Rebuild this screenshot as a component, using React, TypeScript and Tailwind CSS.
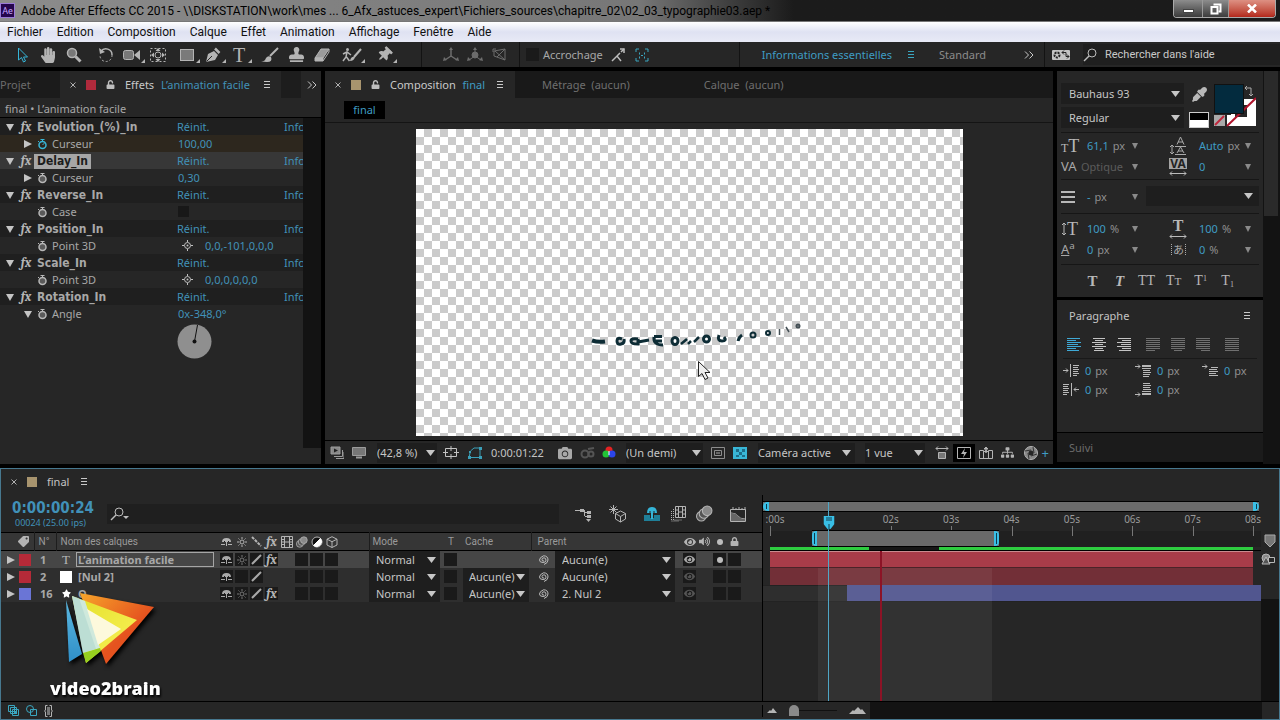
import { useState } from 'react';
import type { CSSProperties, ReactNode } from 'react';
import {
  FaCamera, FaEye, FaEyeDropper, FaHandPaper, FaLock, FaSitemap,
  FaStamp, FaStar, FaTag, FaThumbtack, FaUnlock, FaVolumeUp,
} from 'react-icons/fa';

interface IconProps {
  w?: number;
  h?: number;
  className?: string;
  children: ReactNode;
}

const Icon = ({ w = 16, h = 16, className = '', children }: IconProps) => (
  <svg
    width={w}
    height={h}
    viewBox={`0 0 ${w} ${h}`}
    fill="none"
    stroke="currentColor"
    className={`shrink-0 ${className}`}
    aria-hidden="true"
  >
    {children}
  </svg>
);

const Down = ({ className = '' }: { className?: string }) => (
  <Icon w={9} h={6} className={className}>
    <path d="M0 0h9L4.500 6z" fill="currentColor" stroke="none" />
  </Icon>
);

const SmallDown = () => (
  <Icon w={6} h={6} className="text-[#8a8a8a]">
    <path d="M0 0h6L3 6z" fill="currentColor" stroke="none" />
  </Icon>
);

const Twirl = ({ open = false }: { open?: boolean }) => (
  <Icon w={8} h={8} className="text-[#c4c4c4]">
    <path d={open ? 'M0 1h8L4 8z' : 'M0 0v8l8-4z'} fill="currentColor" stroke="none" />
  </Icon>
);

const MenuLines = ({ className = 'text-[#c8c8c8]' }: { className?: string }) => (
  <Icon w={7} h={8} className={className}>
    <path d="M0 .5h6M0 3.500h6M0 6.500h6" />
  </Icon>
);

const Close = () => (
  <Icon w={6} h={6} className="text-[#b0b0b0]">
    <path d="M.5 .5l5 5M5.500 .5l-5 5" />
  </Icon>
);

const Chevrons = () => (
  <Icon w={10} h={8} className="text-[#c8c8c8]">
    <path d="M1 .5L4.500 4 1 7.500M5.500 .5L9 4 5.500 7.500" />
  </Icon>
);

const Fx = () => <span className="font-serif text-[13px] leading-[13px] font-bold italic text-[#b5b5b5]">fx</span>;

const Loupe = ({ caret = false }: { caret?: boolean }) => (
  <Icon w={20} h={14} className="text-[#bdbdbd]">
    <circle cx="9" cy="5" r="4" />
    <path d="M6 8l-5 5" strokeWidth="1.500" />
    {caret && <path d="M13 9h6l-3 3z" fill="currentColor" stroke="none" />}
  </Icon>
);

const Stopwatch = ({ active = false }: { active?: boolean }) => (
  <Icon w={11} h={12} className={active ? 'text-[#39b6d6]' : 'text-[#b8b8b8]'}>
    <circle cx="5.500" cy="7" r="3.500" strokeWidth="1.500" fill={active ? 'none' : '#5a5a5a'} />
    <path d="M3.500 1.500h4M5.500 1.500v2M1 3l1 1" />
    {active && <path d="M5.500 7l2-2" />}
  </Icon>
);

const Shy = () => (
  <Icon w={11} h={9}>
    <path d="M1 5q0-4 4.500-4T10 5z" fill="currentColor" stroke="none" />
    <path d="M5.500 3v6M0 7.500h4M7 7.500h4" />
    <path d="M3.500 5V4M7.500 5V4" stroke="#222" />
  </Icon>
);

const Sun = () => (
  <Icon w={10} h={10}>
    <circle cx="5" cy="5" r="2" />
    <path d="M5 0v2M5 8v2M0 5h2M8 5h2M1.500 1.500l1 1M7.500 7.500l1 1M8.500 1.500l-1 1M2.500 7.500l-1 1" />
  </Icon>
);

const Slash = () => (
  <Icon w={11} h={11}>
    <path d="M1 10L10 1" strokeWidth="2" />
  </Icon>
);

const Balls = ({ size = 12 }: { size?: number }) => (
  <svg width={size} height={size} viewBox="0 0 16 16" fill="#555" stroke="currentColor" className="shrink-0" aria-hidden="true">
    <circle cx="5" cy="10.500" r="4.500" />
    <circle cx="7.500" cy="8" r="4.500" />
    <circle cx="10.500" cy="5.500" r="4.500" fill="#8a8a8a" />
  </svg>
);

const Cube = () => (
  <Icon w={12} h={12}>
    <path d="M6 .7l5 2.500v5.800L6 11.500 1 9V3.200zM1 3.200l5 2.500 5-2.500M6 5.700v5.800" />
  </Icon>
);

const Film = () => (
  <Icon w={12} h={12}>
    <path d="M.5 .5h11v11H.5zM3.500 .5v11M8.500 .5v11M.5 3.500h3M.5 6h3M.5 8.500h3M8.500 3.500h3M8.500 6h3M8.500 8.500h3M3.500 6h5" />
  </Icon>
);

const Whip = () => (
  <Icon w={11} h={10} className="text-[#bdbdbd]">
    <path d="M6 6q-2 .5-2-1.500Q4 2.800 6 2.800T8 5.200Q8 7.500 5 7.500 1.500 7.500 1.500 5T5.500 .8Q10 .8 10 5q0 3-4 4.500" />
  </Icon>
);

const ToolButton = ({ label, corner = false, children }: { label: string; corner?: boolean; children: ReactNode }) => (
  <button type="button" aria-label={label} className="relative flex h-6 w-[26px] shrink-0 items-center justify-center text-[#b4b4b4]">
    {children}
    {corner && <span className="absolute right-0 bottom-1 border-[2px] border-transparent border-r-[#b4b4b4] border-b-[#b4b4b4]" />}
  </button>
);

const Divider = ({ className = '' }: { className?: string }) => <span className={`w-px self-stretch bg-[#131313] ${className}`} />;

interface PickProps {
  label: string;
  options: string[];
  className?: string;
  arrow?: string;
}

const Pick = ({ label, options, className = '', arrow = 'right-1' }: PickProps) => (
  <span className={`relative flex items-center bg-[#1e1e1e] text-[#c6c6c6] ${className}`}>
    <select aria-label={label} className="h-full w-full appearance-none bg-transparent p-0 outline-none">
      {options.map((o) => <option key={o}>{o}</option>)}
    </select>
    <Down className={`pointer-events-none absolute ${arrow}`} />
  </span>
);

const TitleBar = () => (
  <header className="flex h-[21px] items-center bg-linear-to-r from-[#8c8c8c] via-[#777] via-50% to-[#1b1b1b] to-62% font-['Roboto','Noto_Sans',sans-serif] text-[12px] leading-[20px] text-black">
    <span className="flex h-[15px] w-[15px] items-center justify-center border border-[#9a7bd8] bg-[#25064d] text-[9px] text-[#c9a8ff]">Ae</span>
    <h1 className="ml-1.5 whitespace-nowrap">
      Adobe After Effects CC 2015 - \\DISKSTATION\work\mes ... 6_Afx_astuces_expert\Fichiers_sources\chapitre_02\02_03_typographie03.aep *
    </h1>
    <div className="mr-1 ml-auto flex h-[18px] self-start overflow-hidden rounded-b border border-t-0 border-[#aaa] text-white">
      <button type="button" aria-label="Réduire" className="flex w-[28px] items-center justify-center bg-linear-to-b from-[#8d8d8d] to-[#3d3d3d]">
        <span className="mt-1 h-[4px] w-[11px] border border-[#444] bg-white" />
      </button>
      <button type="button" aria-label="Restaurer" className="flex w-[27px] items-center justify-center border-x border-[#999] bg-linear-to-b from-[#8d8d8d] to-[#3d3d3d]">
        <Icon w={12} h={12}><path d="M3.500 1.500h7v7h-2" strokeWidth="2" /><path d="M1.500 4h6v6.500h-6z" strokeWidth="2" /></Icon>
      </button>
      <button type="button" aria-label="Fermer" className="flex w-[46px] items-center justify-center bg-linear-to-b from-[#dd9083] to-[#b3261a]">
        <Icon w={10} h={9}><path d="M1 .5l8 8M9 .5l-8 8" strokeWidth="2.500" /></Icon>
      </button>
    </div>
  </header>
);

const MENUS = ['Fichier', 'Edition', 'Composition', 'Calque', 'Effet', 'Animation', 'Affichage', 'Fenêtre', 'Aide'];

const MenuBar = () => (
  <nav className="flex h-[21px] items-center gap-[14px] border-t border-[#777] bg-linear-to-b from-white via-[#dfe2f2] via-50% to-[#e8eaf6] pl-[7px] font-['Roboto','Noto_Sans',sans-serif] text-[12px] text-[#111]">
    {MENUS.map((m) => <button key={m} type="button">{m}</button>)}
  </nav>
);

const Toolbar = () => (
  <div className="flex h-[25px] items-center bg-[#262626] pl-[9px] text-[#a8a8a8]">
    <ToolButton label="Sélection">
      <Icon className="text-[#35b5d8]"><path d="M4.500 1v12l3-2.500 2 4.500 2-1-2-4h4z" /></Icon>
    </ToolButton>
    <ToolButton label="Main"><FaHandPaper size={16} /></ToolButton>
    <ToolButton label="Zoom">
      <Icon><circle cx="6" cy="6" r="4.500" fill="#777" strokeWidth="1.500" /><path d="M9.500 9.500l5 5" strokeWidth="3" /></Icon>
    </ToolButton>
    <span className="w-1.5" />
    <ToolButton label="Rotation">
      <Icon>
        <path d="M3 4.500A6 6 0 0 1 14 8" strokeWidth="1.500" />
        <path d="M14 8A6 6 0 0 1 2 9" strokeDasharray="2 2" />
        <path d="M1 1l1 6 5-2z" fill="currentColor" stroke="none" />
      </Icon>
    </ToolButton>
    <ToolButton label="Caméra" corner>
      <Icon w={18}><rect x=".5" y="3.500" width="10" height="9" rx="2" fill="#777" /><path d="M11 8l6-5v10z" fill="currentColor" stroke="none" /></Icon>
    </ToolButton>
    <ToolButton label="Déplacement arrière">
      <Icon>
        <rect x=".5" y="1.500" width="15" height="13" strokeDasharray="2 2" />
        <circle cx="8" cy="8" r="3" />
        <path d="M8 1l2.500 3h-5zM8 15l2.500-3h-5zM1 8l3-2.500v5zM15 8l-3-2.500v5z" fill="currentColor" stroke="none" />
      </Icon>
    </ToolButton>
    <span className="w-[3px]" />
    <ToolButton label="Rectangle" corner>
      <Icon><rect x="1.500" y="2.500" width="13" height="11" fill="#7a7a7a" /></Icon>
    </ToolButton>
    <ToolButton label="Plume" corner>
      <Icon><path d="M1 15l2-8 6-3 4 4-3 5z" fill="currentColor" stroke="none" /><path d="M1.500 14.500L7 9" stroke="#262626" /><path d="M10 1.500l4.500 4.500" strokeWidth="2.500" /></Icon>
    </ToolButton>
    <ToolButton label="Texte" corner><span className="font-['Liberation_Serif'] text-[20px] leading-none">T</span></ToolButton>
    <span className="w-[5px]" />
    <ToolButton label="Pinceau">
      <Icon w={18}><path d="M17 1l-8 8" strokeWidth="2" /><path d="M0 14.500q4 0 5-3.500 2-3 5-1 2 5-4 5z" fill="currentColor" stroke="none" /></Icon>
    </ToolButton>
    <ToolButton label="Tampon"><FaStamp size={15} /></ToolButton>
    <ToolButton label="Gomme">
      <Icon><path d="M1 11l6-9h8l-6 9z" fill="#9a9a9a" /><path d="M1 11h8v3H1z" fill="currentColor" /><path d="M9 14l6-9V2" /></Icon>
    </ToolButton>
    <span className="w-1" />
    <ToolButton label="Roto-pinceau" corner>
      <Icon w={20}>
        <circle cx="5.500" cy="2.500" r="1.500" fill="currentColor" stroke="none" />
        <path d="M5 5l-1 5-3 4M4.500 10l3 4M1 7l4-2 4 3" strokeWidth="1.500" />
        <path d="M19 2l-7 8" strokeWidth="2" /><path d="M8 14q1-5 5-4-1 4-5 4z" fill="currentColor" stroke="none" />
      </Icon>
    </ToolButton>
    <span className="w-1.5" />
    <ToolButton label="Marionnette" corner><FaThumbtack size={15} className="rotate-45" /></ToolButton>
    <Divider className="mr-[21px] ml-6" />
    <div className="flex gap-2 text-[#6d6d6d]">
      <Icon><path d="M8 9V2M8 9l-6 4M8 9l6 4" strokeWidth="1.500" /><path d="M8 0l2 3H6zM0 14l1-4 3 3zM16 14l-1-4-3 3z" fill="currentColor" stroke="none" /></Icon>
      <Icon><circle cx="8" cy="8" r="3" fill="currentColor" /><path d="M8 9V2M8 9l-6 4M8 9l6 4" /><path d="M8 0l2 3H6zM0 14l1-4 3 3zM16 14l-1-4-3 3z" fill="currentColor" stroke="none" /></Icon>
      <Icon><path d="M3 4l11-2v11L3 9zM4 4l10 9M2 2h3M2 2v3M6 10l8-8" /></Icon>
    </div>
    <Divider className="mr-1.5 ml-3" />
    <label className="flex items-center gap-1">
      <input type="checkbox" className="h-[13px] w-[13px] appearance-none bg-[#1a1a1a]" />
      Accrochage
    </label>
    <div className="ml-2 flex gap-2.5">
      <Icon w={14} className="text-[#bdbdbd]"><path d="M1 14l5-5 4 5M6 9l3-3M10 5l3-3" strokeWidth="1.500" /><path d="M9 2h4v4" strokeWidth="1.500" /></Icon>
      <Icon w={14} className="text-[#3aa6c0]">
        <path d="M1 5V2h3M10 2h3v3M13 11v3h-3M4 14H1v-3M4.500 5.500v2M9.500 5.500v2M4.500 9.500v2M9.500 9.500v2M6 8.500h2" />
      </Icon>
    </div>
    <Divider className="mr-[22px] ml-auto" />
    <button type="button" className="text-[#3f9cc4]">Informations essentielles</button>
    <MenuLines className="ml-4 text-[#3aa6c0]" />
    <button type="button" className="ml-6 text-[#8c8c8c]">Standard</button>
    <span className="ml-[38px]"><Chevrons /></span>
    <Divider className="mr-1.5 ml-2.5" />
    <Icon w={20} h={12} className="text-[#c4c4c4]">
      <rect x="1" y="1" width="18" height="10" fill="currentColor" stroke="none" rx="1" />
      <circle cx="6" cy="6" r="2.500" stroke="#222" strokeWidth="2" strokeDasharray="2 1" />
      <path d="M11 3.500h4v4h3M13 1.500l-2 2 2 2M16 5.500l2 2-2 2" stroke="#222" />
    </Icon>
    <label className="ml-3 flex h-[21px] w-[197px] items-center bg-[#1f1f1f]">
      <Loupe />
      <input aria-label="Rechercher dans l'aide" placeholder="Rechercher dans l'aide" className="ml-0.5 w-full bg-transparent font-['Roboto','Noto_Sans',sans-serif] text-[11px] outline-none placeholder:text-[#c9c9c9]" />
    </label>
  </div>
);

interface Effect {
  name: string;
  prop: string;
  value?: string;
  kind: 'slider' | 'check' | 'point' | 'angle';
}

const EFFECTS: Effect[] = [
  { name: 'Evolution_(%)_In', prop: 'Curseur', value: '100,00', kind: 'slider' },
  { name: 'Delay_In', prop: 'Curseur', value: '0,30', kind: 'slider' },
  { name: 'Reverse_In', prop: 'Case', kind: 'check' },
  { name: 'Position_In', prop: 'Point 3D', value: '0,0,-101,0,0,0', kind: 'point' },
  { name: 'Scale_In', prop: 'Point 3D', value: '0,0,0,0,0,0', kind: 'point' },
  { name: 'Rotation_In', prop: 'Angle', value: '0x-348,0°', kind: 'angle' },
];

const EffectRows = ({ effect, selected, keyed, onSelect }: { effect: Effect; selected: boolean; keyed: boolean; onSelect: () => void }) => (
  <li>
    <div className={`flex h-[17px] items-center overflow-hidden ${selected ? 'bg-[#373737]' : 'bg-[#1f1f1f]'}`}>
      <span className="flex w-[18px] shrink-0 justify-end pr-1"><Twirl open /></span>
      <span className="w-[16px] shrink-0 text-center"><Fx /></span>
      <span className="w-[143px] shrink-0">
        <button
          type="button"
          onClick={onSelect}
          className={`h-[15px] px-[3px] font-['DejaVu_Sans_Condensed','Noto_Sans',sans-serif] text-[12px] leading-[15px] font-bold ${selected ? 'bg-[#a6a6a6] text-[#1c1c1c]' : ''}`}
        >
          {effect.name}
        </button>
      </span>
      <button type="button" className="w-[107px] shrink-0 text-left text-[#4191b8]">Réinit.</button>
      <button type="button" className="shrink-0 text-[#4191b8]">Info</button>
    </div>
    <div className={`flex h-[17px] items-center ${keyed ? 'bg-[#2d271e]' : 'bg-[#262626]'}`}>
      <span className="flex w-8 justify-end">{effect.kind === 'slider' && <Twirl />}{effect.kind === 'angle' && <Twirl open />}</span>
      <span className="ml-[5px] w-[15px]"><Stopwatch active={keyed} /></span>
      <span className="w-[126px]">{effect.prop}</span>
      {effect.kind === 'check' && <input type="checkbox" aria-label={effect.name} className="h-[11px] w-[11px] appearance-none bg-[#181818]" />}
      {effect.kind === 'point' && (
        <Icon w={11} h={11} className="mr-3 ml-1 text-[#c0c0c0]">
          <circle cx="5.500" cy="5.500" r="3" /><circle cx="5.500" cy="5.500" r="1" fill="currentColor" stroke="none" /><path d="M5.500 0v2M5.500 9v2M0 5.500h2M9 5.500h2" />
        </Icon>
      )}
      {effect.value && <button type="button" className="whitespace-nowrap text-[#4191b8]">{effect.value}</button>}
    </div>
  </li>
);

const EffectsPanel = () => {
  const [selected, setSelected] = useState('Delay_In');
  return (
    <section className="flex w-[321px] shrink-0 flex-col bg-[#262626]">
      <div className="flex h-[27px] items-center">
        <button type="button" className="flex h-full w-[60px] items-center bg-[#1b1b1b] text-[#6b6b6b]">Projet</button>
        <span className="ml-2.5"><Close /></span>
        <span className="ml-2.5 h-[10px] w-[10px] bg-[#b02a3c]" />
        <FaUnlock size={9} className="ml-2.5 text-[#bdbdbd]" />
        <h2 className="ml-2.5 whitespace-nowrap text-[#c9c9c9]">Effets <span className="ml-1 text-[#4191b8]">L’animation facile</span></h2>
        <span className="ml-3.5"><MenuLines /></span>
        <span className="ml-2.5 h-full w-[20px] bg-[#1d1d1d]" />
        <span className="mr-1 ml-auto"><Chevrons /></span>
      </div>
      <p className="h-[20px] border-b border-black pl-[5px] leading-[21px]">final • L’animation facile</p>
      <div className="flex flex-1">
        <ul className="w-[303px] overflow-hidden">
          {EFFECTS.map((e, i) => (
            <EffectRows key={e.name} effect={e} selected={selected === e.name} keyed={i === 0} onSelect={() => setSelected(e.name)} />
          ))}
          <li className="pt-[2px] pl-[177px]">
            <Icon w={35} h={35}>
              <circle cx="17.500" cy="17.500" r="17" fill="#8f8f8f" stroke="none" />
              <path d="M17.500 17.500L20.500 1" stroke="#111" />
              <circle cx="17.500" cy="17.500" r="2" fill="#111" stroke="none" />
            </Icon>
          </li>
        </ul>
        <div className="mb-4 flex-1 bg-[#131313]" />
      </div>
    </section>
  );
};

/* letters of the title while they tumble in, seen nearly edge on */
const Artwork = () => (
  <svg className="absolute inset-0" width="547" height="307" viewBox="0 0 547 307" fill="none" stroke="#0d2c35" strokeWidth="3" aria-hidden="true">
    <path d="M176 211.500q6 2 13 1" strokeWidth="4" />
    <path d="M206 210q-5-2-5 2t4 3 3-5M222 210q-7-1-7 2t7 3v-5M222 213l11-2" />
    <path d="M238 207.500h8M238 208q-1 8 9 8M239 212h7" />
    <ellipse cx="259" cy="212" rx="3" ry="3.500" />
    <path d="M265 215l6-5M272 215l3-3M278 213l5-5" strokeWidth="2.500" />
    <circle cx="290.500" cy="210" r="3" />
    <path d="M303 206q-2 6 3 6t2-4" />
    <path d="M322 212q1-4 4-6" />
    <circle cx="337" cy="206" r="2.500" strokeWidth="2" />
    <circle cx="352" cy="204" r="2" strokeWidth="2" />
    <path d="M363.500 200v6M370 198l3 5" strokeWidth="1.500" stroke="#444f55" />
    <circle cx="382" cy="197" r="1.500" strokeWidth="2" stroke="#444f55" />
    <path d="M282.500 232.500v15l3.500-3 3 6 3-1.500-3-5.500h5z" fill="#eee" stroke="#222" strokeWidth="1" />
  </svg>
);

const ViewerPanel = () => (
  <section className="flex min-w-0 flex-1 flex-col bg-[#262626]">
    <div className="flex h-[27px] items-center bg-[#191919] text-[#6f6f6f]">
      <div className="flex h-full w-[190px] items-center bg-[#262626] text-[#c9c9c9]">
        <span className="ml-2.5"><Close /></span>
        <span className="ml-2.5 h-[10px] w-[10px] bg-[#a8946e]" />
        <FaUnlock size={9} className="ml-2.5 text-[#bdbdbd]" />
        <h2 className="ml-2.5 whitespace-nowrap">Composition <span className="ml-1 text-[#3f9cc4]">final</span></h2>
        <span className="ml-3"><MenuLines /></span>
      </div>
      <button type="button" className="ml-[27px]">Métrage&nbsp; (aucun)</button>
      <button type="button" className="ml-[74px]">Calque&nbsp; (aucun)</button>
    </div>
    <div className="flex h-[25px] items-center border-b border-[#141414] pl-[19px]">
      <button type="button" className="h-[18px] w-[41px] bg-black text-[#3f9cc4]">final</button>
    </div>
    <div className="flex flex-1 justify-center pt-1.5 pb-1">
      <div className="relative w-[547px] overflow-hidden bg-[repeating-conic-gradient(#cbcbcb_0_25%,#fff_0_50%)] bg-[length:16px_16px]">
        <Artwork />
      </div>
    </div>
    <footer className="flex h-[24px] items-center border-t border-black text-[#c4c4c4]">
      <div className="flex w-[45px] items-center gap-2 pl-[5px] text-[#9c9c9c]">
        <Icon w={14} h={13}><path d="M1 1h9v7H1z" fill="#888" /><path d="M4 10.500h8.500V4M6 12.500h8V6" /><path d="M4 2.500v4L8 4.500z" fill="#222" stroke="none" /></Icon>
        <Icon w={14} h={13}><path d="M.5 1.500h13v8H.5z" fill="#777" /><path d="M4 11.500h6" strokeWidth="2" /></Icon>
      </div>
      <Pick label="Zoom" options={['(42,8 %)', '50 %', '100 %']} className="ml-[7px] h-5 w-[60px]" arrow="right-0.5" />
      <div className="ml-1.5 flex w-[36px] items-center gap-2">
        <Icon w={16} h={13}><path d="M2.500 2.500h11v8h-11zM8 0v5M8 8v5M0 6.500h5M11 6.500h5" /></Icon>
        <Icon w={16} h={13} className="text-[#3a9fb8]"><path d="M2 11.500L3.500 5 7 2h6v9.500z" /><path d="M1 10h3v3H1zM12 1h3v3h-3zM12 10h3v3h-3zM2 5h2v2H2z" fill="currentColor" stroke="none" /></Icon>
      </div>
      <button type="button" className="ml-3 w-[61px] text-left">0:00:01:22</button>
      <FaCamera size={14} className="ml-[6px] text-[#a8a8a8]" />
      <Icon w={16} h={13} className="ml-2 text-[#555]"><circle cx="5" cy="8" r="3.500" strokeWidth="2" /><circle cx="11" cy="8" r="2.500" strokeWidth="2" /><path d="M8 3l6-1" strokeWidth="2" /></Icon>
      <Icon w={16} h={13} className="ml-1.5"><circle cx="7" cy="4" r="3.500" fill="#e32222" stroke="none" /><circle cx="4" cy="8" r="3.500" fill="#22c336" stroke="none" /><circle cx="10" cy="8" r="3.500" fill="#2b45ea" stroke="none" /><path d="M7 5v4" stroke="#fff" /></Icon>
      <Pick label="Résolution" options={['(Un demi)', 'Intégrale', '(Un quart)']} className="ml-2 h-5 w-[77px]" arrow="right-0.5" />
      <div className="ml-2 flex items-center gap-2 text-[#8d8d8d]">
        <Icon w={14} h={12}><path d="M.5 .5h13v11H.5zM3.500 3.500h7v5h-7z" /><path d="M5 5h4v2H5z" fill="#666" stroke="none" /></Icon>
        <Icon w={14} h={12} className="text-[#39b6d6]">
          <path d="M0 0h14v12H0z" fill="currentColor" stroke="none" />
          <path d="M3 2h3v3h3V2h3v3H9v3h3v2H9V8H6v2H3V8h3V5H3z" fill="#1d6d88" stroke="none" />
        </Icon>
      </div>
      <Pick label="Vue 3D" options={['Caméra active', 'De face', 'Gauche']} className="ml-[11px] h-5 w-[97px]" />
      <Pick label="Disposition des vues" options={['1 vue', '2 vues']} className="ml-2.5 h-5 w-[60px]" arrow="right-0.5" />
      <div className="mr-1 ml-auto flex items-center gap-1 text-[#b4b4b4]">
        <Icon w={14} h={13}><path d="M1 2.500h12M3 .5l-2 2 2 2M11 .5l2 2-2 2" /><path d="M3.500 6.500h7v6h-7z" fill="#777" /></Icon>
        <span className="flex h-[18px] w-[22px] items-center justify-center bg-black">
          <Icon w={14} h={12}><path d="M.5 .5h13v11H.5z" /><path d="M8 1L4 7h3l-1 4 4-6H7z" fill="currentColor" stroke="none" /></Icon>
        </span>
        <Icon w={14} h={12}><path d="M.5 3.500h4l2 2V3.500h1v2l2-2h4v8H.5zM4.500 4v7M9.500 4v7M7 0v4" /><path d="M5 2l2-2 2 2z" fill="currentColor" /></Icon>
        <FaSitemap size={13} className="ml-1" />
        <Icon w={14} h={14} className="ml-1.5"><circle cx="7" cy="7" r="6.500" fill="#888" /><circle cx="7" cy="7" r="2.500" fill="#262626" stroke="none" /><path d="M1 5l6-1M9 1l1 6M13 8l-6 2M5 13L4 7" stroke="#333" /></Icon>
        <span className="text-[13px] text-[#3f9cc4]">+</span>
      </div>
    </footer>
  </section>
);

const Serif = ({ children, className = '' }: { children: ReactNode; className?: string }) => (
  <span className={`font-['Liberation_Serif'] leading-none text-[#b8b8b8] ${className}`}>{children}</span>
);

const CharCell = ({ icon, value, unit = '', dim = false, wide = false }: { icon: ReactNode; value: string; unit?: string; dim?: boolean; wide?: boolean }) => (
  <div className="flex h-[21px] items-center whitespace-nowrap">
    <span className={`flex items-center ${wide ? 'w-[30px]' : 'w-[26px]'}`}>{icon}</span>
    <button type="button" className={dim ? '-ml-1.5 text-[#5c5c5c]' : 'text-[#3f9cc4]'}>
      {value}
      {unit && <span className="ml-1 text-[#8f8f8f]">{unit}</span>}
    </button>
    <span className="ml-auto"><SmallDown /></span>
  </div>
);

const CHAR_STYLES = [
  { label: 'Faux gras', node: <Serif className="text-[15px] font-bold">T</Serif> },
  { label: 'Faux italique', node: <Serif className="text-[15px] font-bold italic">T</Serif> },
  { label: 'Tout en capitales', node: <Serif className="text-[14px]">TT</Serif> },
  { label: 'Petites capitales', node: <Serif className="text-[14px]">T<small>T</small></Serif> },
  { label: 'Exposant', node: <Serif className="text-[14px]">T<sup className="text-[8px]">1</sup></Serif> },
  { label: 'Indice', node: <Serif className="text-[14px]">T<sub className="text-[8px]">1</sub></Serif> },
];

const HorizontalArrows = () => (
  <Icon w={18} h={5} className="text-[#bbb]"><path d="M1 2.500h16M3 .5l-2 2 2 2M15 .5l2 2-2 2" /></Icon>
);

const CharacterPanel = () => (
  <div className="bg-[#262626] px-1 pt-3">
    <div className="flex">
      <div className="flex flex-col gap-[3px]">
        <Pick label="Police" options={['Bauhaus 93', 'Arial']} className="h-[21px] w-[123px] pl-2" />
        <Pick label="Style de police" options={['Regular', 'Bold']} className="h-[21px] w-[123px] pl-2" />
      </div>
      <div className="ml-[5px] flex flex-col items-center justify-between">
        <FaEyeDropper size={15} className="mt-1 text-[#b8b8b8]" />
        <span className="h-[16px] w-[20px] border border-[#ccc] bg-linear-to-b from-black from-50% to-white to-50%" />
      </div>
      <Icon w={42} h={44} className="ml-[5px]">
        <path d="M17 16h25v27H13V32h4z" fill="#fff" stroke="none" />
        <path d="M21 22h12v12H21z" fill="#262626" stroke="none" />
        <path d="M13 43L42 15" stroke="#b0142c" strokeWidth="2" />
        <rect x=".5" y="1.500" width="29" height="29" fill="#032b3e" stroke="#111" />
        <rect x=".5" y="32.500" width="10" height="10" fill="#aaa" />
        <path d="M1 42l9-9" stroke="#c0263c" strokeWidth="2" />
        <path d="M31 5h6v8M33 3l-2 2 2 2M35 11l2 2 2-2" stroke="#aaa" />
      </Icon>
    </div>
    <div className="mt-1 grid grid-cols-[77px_82px] gap-x-[31px] border-y border-[#161616] py-0.5">
      <CharCell icon={<Serif className="text-[18px]"><span className="text-[12px]">T</span>T</Serif>} value="61,1" unit="px" />
      <CharCell wide icon={<Icon w={18} h={18} className="text-[#aaa]"><path d="M3 8v9M1 10l2-2 2 2M1 15l2 2 2-2M6 9.500h11M6 17.500h11" /><path d="M8 7.500L11.500 0 15 7.500M9 5h5M8 16l3.500-6 3.500 6M9 14h5" /></Icon>} value="Auto" unit="px" />
      <CharCell icon={<span className="text-[13px] leading-none">VA</span>} value="Optique" dim />
      <CharCell
        wide
        icon={<span className="flex flex-col"><span className="mb-0.5 h-[11px] w-[18px] bg-[#a4a4a4] text-center text-[12px] leading-[12px] font-bold text-[#222]">VA</span><HorizontalArrows /></span>}
        value="0"
      />
    </div>
    <div className="grid grid-cols-[77px_1fr] gap-x-2 py-1.5">
      <CharCell icon={<Icon w={14} h={12} className="text-[#b8b8b8]"><path d="M0 1h14M0 6h14M0 11h14" strokeWidth="2" /></Icon>} value="-" unit="px" />
      <Pick label="Contour" options={['', 'Fond sur contour']} className="h-[20px]" arrow="right-1.5" />
    </div>
    <div className="grid grid-cols-[77px_82px] gap-x-[31px] border-y border-[#161616] py-1">
      <CharCell icon={<><Icon w={6} h={14} className="text-[#b8b8b8]"><path d="M3 1v12M1 3l2-2 2 2M1 11l2 2 2-2" /></Icon><Serif className="text-[18px]">T</Serif></>} value="100" unit="%" />
      <CharCell wide icon={<span className="flex flex-col items-center"><Serif className="text-[16px] font-bold">T</Serif><HorizontalArrows /></span>} value="100" unit="%" />
      <CharCell icon={<span className="text-[13px] leading-none"><u>A</u><sup>a</sup></span>} value="0" unit="px" />
      <CharCell wide icon={<span className="ml-0.5 border-x border-dotted border-[#aaa] px-px font-['Noto_Sans_CJK_JP'] text-[11px] leading-none">あ</span>} value="0" unit="%" />
    </div>
    <div className="flex h-[32px] items-center gap-2.5 pl-[23px]">
      {CHAR_STYLES.map((s) => <button key={s.label} type="button" aria-label={s.label} className="flex h-5 min-w-[17px] items-center justify-center">{s.node}</button>)}
    </div>
  </div>
);

const ALIGNMENTS = [
  { label: 'Aligner à gauche', d: 'M0 .5h13M0 2.500h9M0 4.500h14M0 6.500h11M0 8.500h14M0 10.500h9M0 12.500h12', tone: 'text-[#3fa9d6]' },
  { label: 'Centrer', d: 'M1 .5h12M3 2.500h8M0 4.500h14M3 6.500h8M0 8.500h14M3 10.500h8M2 12.500h10', tone: 'text-[#c4c4c4]' },
  { label: 'Aligner à droite', d: 'M1 .5h13M5 2.500h9M0 4.500h14M4 6.500h10M0 8.500h14M5 10.500h9M2 12.500h12', tone: 'mr-1 text-[#c4c4c4]' },
  { label: 'Justifier, dernière à gauche', d: 'M0 .5h14M0 2.500h14M0 4.500h14M0 6.500h14M0 8.500h14M0 10.500h14M0 12.500h9', tone: 'text-[#707070]' },
  { label: 'Justifier, dernière centrée', d: 'M0 .5h14M0 2.500h14M0 4.500h14M0 6.500h14M0 8.500h14M0 10.500h14M3 12.500h8', tone: 'text-[#707070]' },
  { label: 'Justifier, dernière à droite', d: 'M0 .5h14M0 2.500h14M0 4.500h14M0 6.500h14M0 8.500h14M0 10.500h14M5 12.500h9', tone: 'mr-1 text-[#707070]' },
  { label: 'Justifier tout', d: 'M0 .5h14M0 2.500h14M0 4.500h14M0 6.500h14M0 8.500h14M0 10.500h14M0 12.500h14', tone: 'text-[#707070]' },
];

const INDENTS = [
  { label: 'Retrait à gauche', d: 'M0 6.500h5M3 4.500l2 2-2 2M7.500 0v13M10 1.500h6M10 3.500h5M10 5.500h6M10 7.500h5M10 9.500h6M10 11.500h4' },
  { label: 'Espace avant', d: 'M0 2.500h5M3 .5l2 2-2 2M7 1.500h9M7 2.500h9M7 4.500h9M8 6.500h7M8 8.500h8M8 10.500h7M8 12.500h6' },
  { label: 'Retrait première ligne', d: 'M0 2.500h5M3 .5l2 2-2 2M9 3.500h7M7 5.500h8M7 7.500h9M7 9.500h7M7 11.500h9' },
  { label: 'Retrait à droite', d: 'M0 1.500h6M0 3.500h5M0 5.500h6M0 7.500h5M0 9.500h6M0 11.500h4M8.500 0v13M16 6.500h-5M13 4.500l-2 2 2 2' },
  { label: 'Espace après', d: 'M8 .5h7M8 2.500h8M8 4.500h7M8 6.500h8M7 8.500h9M7 10.500h9M7 11.500h9M0 11.500h5M3 9.500l2 2-2 2' },
];

const ParagraphPanel = () => (
  <div className="mt-[3px] flex-1 bg-[#262626] px-1.5">
    <div className="flex h-[31px] items-center justify-between px-1.5 text-[#c4c4c4]">
      <h2>Paragraphe</h2>
      <MenuLines />
    </div>
    <div className="flex h-[28px] items-center gap-[11px] border-b border-[#191919] pl-1">
      {ALIGNMENTS.map((a) => (
        <button key={a.label} type="button" aria-label={a.label} className={a.tone}>
          <Icon w={14} h={14}><path d={a.d} /></Icon>
        </button>
      ))}
    </div>
    <div className="mt-[3px] grid grid-cols-[72px_67px_60px] gap-y-px">
      {INDENTS.map((n) => (
        <button key={n.label} type="button" aria-label={n.label} className="flex h-[18px] items-center text-[#3f9cc4]">
          <Icon h={14} className="mr-1.5 text-[#b8b8b8]"><path d={n.d} /></Icon>
          0 <span className="ml-1 text-[#8f8f8f]">px</span>
        </button>
      ))}
    </div>
  </div>
);

const RightPanels = () => (
  <aside className="flex w-[223px] shrink-0 bg-[#131313]">
    <div className="flex w-[206px] flex-col bg-black">
      <CharacterPanel />
      <ParagraphPanel />
      <h2 className="mt-px mb-0.5 h-[29px] bg-[#1b1b1b] pl-3 leading-[29px] text-[#6b6b6b]">Suivi</h2>
    </div>
    <div className="ml-px h-[145px] w-[14px] bg-[#2a2a2a]" />
  </aside>
);

interface Layer {
  num: number;
  name: string;
  swatch: string;
  icon: ReactNode;
  sun: boolean;
  cache: boolean;
  parent: string;
  solo: boolean;
}

const LAYERS: Layer[] = [
  { num: 1, name: 'L’animation facile', swatch: 'bg-[#b52a38]', icon: <Serif className="text-[13px]">T</Serif>, sun: true, cache: false, parent: 'Aucun(e)', solo: true },
  { num: 2, name: '[Nul 2]', swatch: 'bg-[#b52a38]', icon: <span className="block h-3 w-3 bg-white" />, sun: false, cache: true, parent: 'Aucun(e)', solo: false },
  { num: 16, name: 'O', swatch: 'bg-[#6a75d6]', icon: <FaStar size={9} className="text-white" />, sun: true, cache: true, parent: '2. Nul 2', solo: false },
];

const Box = ({ children }: { children?: ReactNode }) => (
  <span className="mx-auto flex h-[13px] w-[13px] items-center justify-center bg-[#1a1a1a]">{children}</span>
);

const LayerRow = ({ layer, selected }: { layer: Layer; selected: boolean }) => (
  <tr className={`h-[17px] ${selected ? 'bg-[#464646]' : 'bg-[#2e2e2e]'}`}>
    <td className="pl-1.5"><Twirl /></td>
    <td><span className="flex pl-px"><span className={`h-[12px] w-[12px] ${layer.swatch}`} /></span></td>
    <td className="pl-1.5 font-bold">{layer.num}</td>
    <td><span className="flex justify-center">{layer.icon}</span></td>
    <td className="font-bold">
      <span className={`block h-[15px] w-[138px] border pl-px leading-[13px] ${selected ? 'border-[#a5a5a5]' : 'border-transparent'}`}>{layer.name}</span>
    </td>
    <td><Box><Shy /></Box></td>
    <td><Box>{layer.sun && <span className="text-[#777]"><Sun /></span>}</Box></td>
    <td><Box><Slash /></Box></td>
    <td>{layer.sun && <Box><Fx /></Box>}</td>
    <td />
    <td><Box /></td>
    <td><Box /></td>
    <td><Box /></td>
    <td />
    <td><Pick label={`Mode ${layer.num}`} options={['Normal', 'Produit']} className="h-[17px] w-[71px] pl-[7px]" /></td>
    <td><span className="ml-[3px] block h-[13px] w-[13px] bg-[#1a1a1a]" /></td>
    <td>{layer.cache && <Pick label={`Cache ${layer.num}`} options={['Aucun(e)', 'Alpha']} className="ml-0.5 h-[17px] w-[66px] pl-1.5" />}</td>
    <td><span className="flex justify-center"><Whip /></span></td>
    <td><Pick label={`Parent ${layer.num}`} options={[layer.parent, 'Aucun']} className="h-[17px] pl-[7px]" /></td>
    <td />
    <td><Box><FaEye size={11} className={selected ? 'text-[#a8a8a8]' : 'text-[#555]'} /></Box></td>
    <td />
    <td><Box>{layer.solo && <span className="h-1.5 w-1.5 rounded-full bg-[#bdbdbd]" />}</Box></td>
    <td><Box /></td>
    <td />
  </tr>
);

const SWITCHES = [
  <Shy key="shy" />,
  <Sun key="sun" />,
  <Icon key="quality" w={11} h={11}><path d="M1 1l9 9" strokeWidth="2" strokeDasharray="3 1" /></Icon>,
  <Fx key="fx" />,
  <Film key="film" />,
  <Balls key="blur" />,
  <Icon key="adjust" w={12} h={12}><circle cx="6" cy="6" r="5" fill="#111" /><path d="M2.500 9.500A5 5 0 0 0 9.500 2.500z" fill="#fff" stroke="#fff" /></Icon>,
  <Cube key="cube" />,
];

const LayerTable = () => (
  <table className="w-full table-fixed border-collapse text-left">
    <colgroup>
      <col className="w-[17px]" /><col className="w-[16px]" /><col className="w-[22px]" /><col className="w-[20px]" /><col className="w-[143px]" />
      <col span={8} className="w-[15px]" />
      <col className="w-[30px]" /><col className="w-[72px]" /><col className="w-[20px]" /><col className="w-[70px]" /><col className="w-[24px]" />
      <col className="w-[120px]" /><col className="w-[7px]" />
      <col span={4} className="w-[15px]" />
      <col />
    </colgroup>
    <thead className="font-['Roboto','Noto_Sans',sans-serif] text-[10px] text-[#9a9a9a]">
      <tr className="h-[18px] border-y border-black bg-[#363636] [&_th]:font-normal">
        <th />
        <th><FaTag size={11} className="-scale-x-100 text-[#b4b4b4]" /></th>
        <th className="border-l border-[#1d1d1d] pl-1">N°</th>
        <th colSpan={2} className="border-l border-[#1d1d1d]"><span className="pl-1">Nom des calques</span></th>
        {SWITCHES.map((s, i) => <th key={i}><span className="flex justify-center text-[#b4b4b4]">{s}</span></th>)}
        <th className="border-r border-[#1d1d1d]" />
        <th><span className="pl-[3px]">Mode</span></th>
        <th><span className="pl-[7px]">T</span></th>
        <th><span className="pl-1">Cache</span></th>
        <th colSpan={3} className="border-l border-[#1d1d1d]"><span className="pl-1.5">Parent</span></th>
        <th><FaEye size={12} className="mx-auto text-[#b4b4b4]" /></th>
        <th><FaVolumeUp size={11} className="mx-auto text-[#b4b4b4]" /></th>
        <th><span className="mx-auto block h-1.5 w-1.5 rounded-full bg-[#bdbdbd]" /></th>
        <th><FaLock size={9} className="mx-auto text-[#b4b4b4]" /></th>
        <th />
      </tr>
    </thead>
    <tbody>
      {LAYERS.map((l) => <LayerRow key={l.num} layer={l} selected={l.num === 1} />)}
    </tbody>
  </table>
);

const DURATION = 8;

const at = (sec: number): CSSProperties => ({ left: `${(sec / DURATION) * 100}%` });

const span = (from: number, to: number): CSSProperties => ({
  left: `${(from / DURATION) * 100}%`,
  width: `${((to - from) / DURATION) * 100}%`,
});

const NavHandle = ({ className = '' }: { className?: string }) => (
  <span className={`flex h-[9px] w-1.5 items-center justify-center bg-[#39bfe6] ${className}`}><span className="h-[5px] w-px bg-[#0b3c4e]" /></span>
);

const WorkHandle = ({ className = '' }: { className?: string }) => (
  <span className={`flex h-[15px] w-[5px] items-center justify-center bg-[#39bfe6] ${className}`}><span className="h-[11px] w-px bg-[#0b3c4e]" /></span>
);

const TimeRuler = () => (
  <div className="relative flex min-w-0 flex-1 flex-col">
    <div className="mr-0.5 flex h-[11px] items-center justify-between border-y border-black bg-[#6b6b6b]">
      <NavHandle className="rounded-l-full" />
      <NavHandle className="rounded-r-full" />
    </div>
    <div className="relative mr-2 ml-[7px] flex-1">
      <div className="relative h-[19px] text-[10px] text-[#9a9a9a]">
        {[0, 2, 3, 4, 5, 6, 7, 8].map((s) => (
          <span key={s} className="absolute -translate-x-1/2 leading-[14px]" style={at(s)}>
            <span className={s === 0 ? 'ml-2.5' : ''}>{s === 0 ? ':00s' : `0${s}s`}</span>
          </span>
        ))}
      </div>
      <div className="relative -mr-2 h-[16px] bg-[#202020]" />
      <div className="absolute inset-x-0 top-[14px] h-[10px]">
        {[0, 2, 3, 4, 5, 6, 7, 8].map((s) => <span key={s} className="absolute h-full w-px bg-[#777]" style={at(s)} />)}
      </div>
      <div className="absolute top-[18px] flex h-[17px] items-center justify-between border-y border-black bg-[#696969]" style={span(0.7, 3.79)}>
        <WorkHandle className="rounded-l-sm" />
        <WorkHandle className="rounded-r-sm" />
      </div>
      <div className="relative h-[3px] bg-[#161616]">
        <span className="absolute h-full bg-[#2ecc40]" style={span(0, 1.64)} />
        <span className="absolute h-full bg-[#2ecc40]" style={span(2.8, 8)} />
      </div>
      <div className="relative -mr-2 h-px bg-black" />
      <div className="relative h-[17px] border-t border-b border-t-[#c98a8f] border-b-[#4a2328] bg-[#a83c49]" />
      <div className="relative h-[17px] bg-[#722f37]" />
      <div className="relative -mr-2 -ml-[7px] h-[17px] border-y border-[#222] bg-[#2e2e2e]" />
      <div className="absolute top-[73px] -right-2 h-[16px] bg-[#51568f]" style={at(1.28)} />
      <div className="absolute top-[56px] bottom-0 bg-white/6" style={span(0.8, 3.68)} />
      <span className="absolute top-[39px] bottom-0 w-0.5 bg-[#8c1326]" style={at(1.83)} />
      <span className="absolute -top-2.5 bottom-0 w-px bg-[#4fa6c6]" style={at(0.96)} />
      <span className="absolute top-1 -translate-x-1/2" style={at(0.97)}>
        <Icon w={11} h={14} className="text-[#39bfe6]">
          <path d="M0 0h11v8l-4 5H4L0 8z" fill="currentColor" stroke="none" />
          <path d="M3.500 1v4M5.500 1v4M7.500 1v4M5.500 8v6" stroke="#123f50" />
        </Icon>
      </span>
    </div>
  </div>
);

/* toggles sitting above the layer columns */
const TimelineToggles = () => (
  <div className="flex items-center text-[#b4b4b4]">
    <Icon className="mr-[18px]"><path d="M0 4.500h10M9.500 5v5M10 6.500h3M10 10.500h3" /><path d="M5 3h4v3H5zM12 5h4v3h-4zM12 9h4v3h-4z" fill="currentColor" stroke="none" /><path d="M11 13h5l-2.500 3z" fill="currentColor" stroke="none" /></Icon>
    <Icon w={18} h={18} className="mr-[17px]"><path d="M4.500 0v9M0 4.500h9M1.500 1.500l6 6M7.500 1.500l-6 6" /><path d="M11.500 6l5 2.500v5.500l-5 3-5-3V8.500zM6.500 8.500l5 3 5-3M11.500 11.500V17" /></Icon>
    <Icon className="mr-2.5 text-[#35b5d8]"><path d="M3 7q0-6 5-6t5 6z" fill="currentColor" stroke="none" /><path d="M0 9h6v3h4V9h6v6H0z" fill="#1f7f98" stroke="none" /><path d="M8 6v7" strokeWidth="2" /><path d="M6 5v2M10 5v2" stroke="#222" /></Icon>
    <Icon className="mr-2.5"><path d="M5.500 .5h10v11h-10zM8.500 .5v11M12.500 .5v11M5.500 4h3M5.500 8h3M12.500 4h3M12.500 8h3M8.500 6h4" /><path d="M3.500 3v11H12M1.500 5v10H9" strokeDasharray="1 1" /></Icon>
    <span className="mr-[17px]"><Balls size={17} /></span>
    <Icon><path d="M.5 3.500h15v12H.5zM3 1v3M6 2v2M9 1v3M12 2v2M15 1v3" /><path d="M1 7q5 0 7 3t7 3" /><path d="M1 7q5 0 7 3t7 3v2H1z" fill="#666" stroke="none" /></Icon>
  </div>
);

const Video2Brain = () => (
  <div className="absolute top-[124px] left-[47px] w-[118px]">
    <svg width="110" height="78" viewBox="0 0 110 78" className="drop-shadow-[2px_3px_2px_#000]" aria-hidden="true">
      <defs>
        <linearGradient id="flame" x1="0" y1="0" x2="1" y2="1"><stop offset="0" stopColor="#f7a62a" /><stop offset=".6" stopColor="#e5531f" /></linearGradient>
        <linearGradient id="lemon" x1="0" y1="0" x2="1" y2="1"><stop offset="0" stopColor="#e3e02a" /><stop offset="1" stopColor="#fbf25a" /></linearGradient>
        <linearGradient id="sky" x1="0" y1="0" x2="0" y2="1"><stop offset="0" stopColor="#5cb8e0" /><stop offset="1" stopColor="#2f8fc8" /></linearGradient>
      </defs>
      <path d="M32 0l74 14-48 57z" fill="url(#flame)" />
      <path d="M18 7l16 54-13 8z" fill="url(#sky)" />
      <path d="M24 3l65 24-51 43z" fill="url(#lemon)" />
      <path d="M24 3l13 5 15 47-17 5z" fill="#cfe9dc" />
      <path d="M35 60l17-5 1 3-15 12z" fill="#96cf1f" />
      <path d="M39 16l34 20-23 16z" fill="#fdf9dc" />
      <path d="M24 3l7 2 17 51-13 4z" fill="#a9d3cc" opacity=".5" />
    </svg>
    <p className="mt-1 ml-0.5 font-['Open_Sans'] text-[18px] leading-[26px] font-extrabold text-white drop-shadow-[1px_2px_1px_#000]">video2brain</p>
  </div>
);

const Timeline = () => (
  <section className="relative flex basis-[35%] flex-col border border-[#47788f] bg-[#262626]">
    <div className="flex h-[26px] items-center text-[#c4c4c4]">
      <span className="ml-2.5"><Close /></span>
      <span className="ml-2.5 h-[10px] w-[10px] bg-[#a8946e]" />
      <h2 className="mr-3 ml-2.5">final</h2>
      <MenuLines />
    </div>
    <div className="flex flex-1">
      <div className="flex w-[762px] shrink-0 flex-col border-r border-black">
        <div className="flex h-[37px] items-center">
          <div className="w-[106px] pl-[11px] text-[#4191b8]">
            <p className="font-['DejaVu_Sans_Condensed','Noto_Sans',sans-serif] text-[15px] leading-[18px] font-bold">0:00:00:24</p>
            <p className="pl-[3px] text-[9px] leading-[12px]">00024 (25.00 ips)</p>
          </div>
          <label className="flex h-5 flex-1 items-center bg-[#1f1f1f] pl-[3px]">
            <Loupe caret />
            <input aria-label="Rechercher un calque" className="w-full bg-transparent pl-2 outline-none" />
          </label>
          <div className="mr-[16px] ml-4"><TimelineToggles /></div>
        </div>
        <LayerTable />
      </div>
      <div className="flex min-w-0 flex-1 pt-1.5">
        <TimeRuler />
        <div className="flex w-[18px] flex-col">
          <span className="mt-[33px] ml-[3px] h-[17px]">
            <Icon w={12} h={14} className="text-[#aaa]"><path d="M1 1h10v7l-5 5-5-5z" fill="#777" /></Icon>
          </span>
          <span className="mt-0.5"><Icon w={15} h={12} className="text-[#b8b8b8]"><circle cx="5" cy="5" r="4" fill="#888" /><path d="M1 11l4-7 4 7z" fill="#555" /><path d="M7.500 4.500h6v5h-6z" fill="#262626" /></Icon></span>
          <span className="mt-[34px] flex-1 bg-[#131313]" />
        </div>
      </div>
    </div>
    <footer className="flex h-[18px] items-center border-t border-black text-[#3aa6c0]">
      <div className="flex w-[762px] shrink-0 items-center gap-[7px] border-r border-black pl-[7px]">
        <Icon w={11} h={12}><path d="M.5 .5h6v6h-6zM2.500 2.500h6v6h-6zM4.500 4.500h6v6h-6z" fill="#262626" /><path d="M6 6h3v3H6z" fill="currentColor" stroke="none" /></Icon>
        <Icon w={11} h={12}><circle cx="4" cy="4" r="3.500" /><path d="M4.500 4.500h6v6h-6z" /></Icon>
        <Icon w={9} h={12} className="text-[#b4b4b4]"><path d="M3.500 .5h-2V5L.5 6l1 1v4.500h2M5.500 .5h2V5l1 1-1 1v4.500h-2" /><path d="M3 2h3v8H3z" fill="#777" stroke="none" /></Icon>
      </div>
      <div className="flex w-[107px] items-center pl-1 text-[#b4b4b4]">
        <Icon w={10} h={5}><path d="M0 5l3-3 1 1 2-3 4 5z" fill="currentColor" stroke="none" /></Icon>
        <input
          type="range"
          aria-label="Zoom temporel"
          defaultValue={0}
          className="mx-3 h-3 w-[48px] appearance-none bg-[linear-gradient(#111,#111)] bg-[length:100%_1px] bg-center bg-no-repeat [&::-webkit-slider-thumb]:h-[11px] [&::-webkit-slider-thumb]:w-[10px] [&::-webkit-slider-thumb]:appearance-none [&::-webkit-slider-thumb]:rounded-t-full [&::-webkit-slider-thumb]:bg-[#8a8a8a]"
        />
        <Icon w={17} h={7}><path d="M0 7l4-4 1 1 4-4 3 3 1-1 4 5z" fill="currentColor" stroke="none" /></Icon>
      </div>
      <div className="mr-[17px] flex-1 self-stretch bg-[#131313]" />
    </footer>
    <Video2Brain />
  </section>
);

export default function App() {
  return (
    <main className="flex h-screen min-h-[720px] flex-col bg-black font-['Noto_Sans'] text-[11px] leading-[16px] text-[#a8a8a8]">
      <TitleBar />
      <MenuBar />
      <Toolbar />
      <div className="my-1 flex flex-1 gap-1">
        <EffectsPanel />
        <ViewerPanel />
        <RightPanels />
      </div>
      <Timeline />
    </main>
  );
}
